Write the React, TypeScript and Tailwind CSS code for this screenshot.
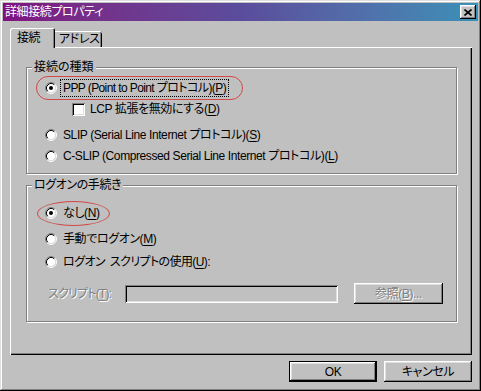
import React from "react";

const raised =
  "shadow-[inset_-1px_-1px_0_#000,inset_1px_1px_0_#fff,inset_-2px_-2px_0_#808080,inset_2px_2px_0_#dfdfdf]";

function Radio({ checked }: { checked?: boolean }) {
  return (
    <svg width="12" height="12" viewBox="0 0 12 12" className="shrink-0">
      <circle cx="6" cy="6" r="4.5" fill="#fff" />
      <path d="M2.11 9.89 A5.5 5.5 0 0 1 9.89 2.11" fill="none" stroke="#808080" strokeWidth="1" />
      <path d="M9.89 2.11 A5.5 5.5 0 0 1 2.11 9.89" fill="none" stroke="#fff" strokeWidth="1" />
      <path d="M2.82 9.18 A4.5 4.5 0 0 1 9.18 2.82" fill="none" stroke="#000" strokeWidth="1" />
      <path d="M9.18 2.82 A4.5 4.5 0 0 1 2.82 9.18" fill="none" stroke="#dfdfdf" strokeWidth="1" />
      {checked && <circle cx="6" cy="6" r="2" fill="#000" />}
    </svg>
  );
}

function U({ c }: { c: string }) {
  return <span className="underline underline-offset-[2px]">{c}</span>;
}

export default function App() {
  return (
    <div className="relative w-[481px] h-[391px] bg-[#c0c0c0] p-[3px] shadow-[inset_-1px_-1px_0_#000,inset_1px_1px_0_#dfdfdf,inset_-2px_-2px_0_#808080,inset_2px_2px_0_#fff] font-['Liberation_Sans','Noto_Sans_CJK_JP',sans-serif] [font-feature-settings:'palt'] text-[12px] leading-[14px] tracking-[-0.4px] text-black whitespace-nowrap">
      {/* Title bar */}
      <div className="flex h-[18px] items-center justify-between bg-gradient-to-r from-[#801080] via-[#5a4c9c] to-[#3890b8] pl-[2px] pr-[2px]">
        <span className="text-white">詳細接続プロパティ</span>
        <div className={`flex h-[14px] w-[16px] items-center justify-center bg-[#c0c0c0] ${raised}`}>
          <svg width="8" height="7" viewBox="0 0 8 7">
            <path d="M0.5 0.5 L7.5 6.5 M7.5 0.5 L0.5 6.5" stroke="#000" strokeWidth="1.6" fill="none" />
          </svg>
        </div>
      </div>

      {/* Tabs */}
      <div className="mt-[7px] ml-[7px] flex h-[19px] items-end">
        <div className="relative z-10 -mb-px flex h-[20px] w-[45px] items-center pl-[7px] bg-[#c0c0c0] rounded-tl-[2px] rounded-tr-[2px] shadow-[inset_1px_1px_0_#fff,inset_-1px_0_0_#000,inset_-2px_0_0_#808080]">
          接続
        </div>
        <div className="flex h-[16px] w-[47px] items-center pl-[4px] rounded-tr-[2px] shadow-[inset_0_1px_0_#fff,inset_-1px_0_0_#000,inset_-2px_0_0_#808080]">
          アドレス
        </div>
      </div>

      {/* Panel */}
      <div className="relative ml-[7px] h-[308px] w-[462px] pt-[20px] pl-[16px] shadow-[inset_1px_1px_0_#fff,inset_-1px_-1px_0_#000,inset_-2px_-2px_0_#808080]">
        {/* Group 1 */}
        <div className="relative h-[107px] w-[431px] border border-[#808080] shadow-[inset_1px_1px_0_#fff,1px_1px_0_#fff]">
          <span className="absolute left-[5px] top-[-8px] bg-[#c0c0c0] px-[2px] tracking-normal">接続の種類</span>
          <div className="flex flex-col pl-[18px]">
            <div className="mt-[10px] flex h-[20px] items-center">
              <Radio checked />
              <span className="ml-[4px] px-[2px] py-[1px] tracking-[-0.6px] outline outline-1 outline-dotted outline-black">
                PPP (Point to Point プロトコル)(<U c="P" />)
              </span>
            </div>
            <div className="mt-[1px] flex h-[20px] items-center pl-[27px]">
              <span className="h-[13px] w-[13px] shrink-0 bg-white shadow-[inset_1px_1px_0_#808080,inset_-1px_-1px_0_#fff,inset_2px_2px_0_#000,inset_-2px_-2px_0_#dfdfdf]" />
              <span className="ml-[3px] px-[2px]">
                LCP 拡張を無効にする(<U c="D" />)
              </span>
            </div>
            <div className="mt-[6px] flex h-[20px] items-center">
              <Radio />
              <span className="ml-[4px] px-[2px]">
                SLIP (Serial Line Internet プロトコル)(<U c="S" />)
              </span>
            </div>
            <div className="mt-[1px] flex h-[20px] items-center">
              <Radio />
              <span className="ml-[4px] px-[2px]">
                C-SLIP (Compressed Serial Line Internet プロトコル)(<U c="L" />)
              </span>
            </div>
          </div>
        </div>

        {/* Group 2 */}
        <div className="relative mt-[11px] h-[137px] w-[431px] border border-[#808080] shadow-[inset_1px_1px_0_#fff,1px_1px_0_#fff]">
          <span className="absolute left-[5px] top-[-8px] bg-[#c0c0c0] px-[2px]">ログオンの手続き</span>
          <div className="flex flex-col pl-[18px]">
            <div className="mt-[17px] flex h-[20px] items-center">
              <Radio checked />
              <span className="ml-[4px] px-[2px]">
                なし(<U c="N" />)
              </span>
            </div>
            <div className="mt-[6px] flex h-[20px] items-center">
              <Radio />
              <span className="ml-[4px] px-[2px]">
                手動でログオン(<U c="M" />)
              </span>
            </div>
            <div className="mt-[3px] flex h-[20px] items-center">
              <Radio />
              <span className="ml-[4px] px-[2px] tracking-[-0.6px]">
                ログオン<span className="inline-block w-[5px]" />スクリプトの使用(<U c="U" />):
              </span>
            </div>
            <div className="mt-[11px] flex h-[21px] items-center pl-[3px]">
              <span className="w-[77px] shrink-0 text-[#808080] [text-shadow:1px_1px_0_#fff] tracking-[-0.8px]">
                スクリプト(<U c="T" />):
              </span>
              <div className="h-[18px] w-[213px] shrink-0 bg-[#c0c0c0] shadow-[inset_1px_1px_0_#808080,inset_-1px_-1px_0_#fff,inset_2px_2px_0_#000,inset_-2px_-2px_0_#dfdfdf]" />
              <div className={`ml-[16px] flex h-[21px] w-[89px] shrink-0 items-center justify-center text-[#808080] [text-shadow:1px_1px_0_#fff] ${raised}`}>
                参照(<U c="B" />)...
              </div>
            </div>
          </div>
        </div>
      </div>

      {/* Buttons */}
      <div className="mt-[6px] flex justify-end gap-[7px] pr-[6px]">
        <div className="flex h-[21px] w-[88px] items-center justify-center border border-black shadow-[inset_-1px_-1px_0_#000,inset_1px_1px_0_#fff,inset_-2px_-2px_0_#808080,inset_2px_2px_0_#dfdfdf]">
          OK
        </div>
        <div className={`flex h-[21px] w-[88px] items-center justify-center ${raised}`}>キャンセル</div>
      </div>

      {/* Annotations */}
      <div className="pointer-events-none absolute left-[36px] top-[76px] h-[24px] w-[207px] rounded-full border border-[#d04848]" />
      <div className="pointer-events-none absolute left-[37px] top-[201px] h-[25px] w-[73px] rounded-[50%] border border-[#d04848]" />
    </div>
  );
}
